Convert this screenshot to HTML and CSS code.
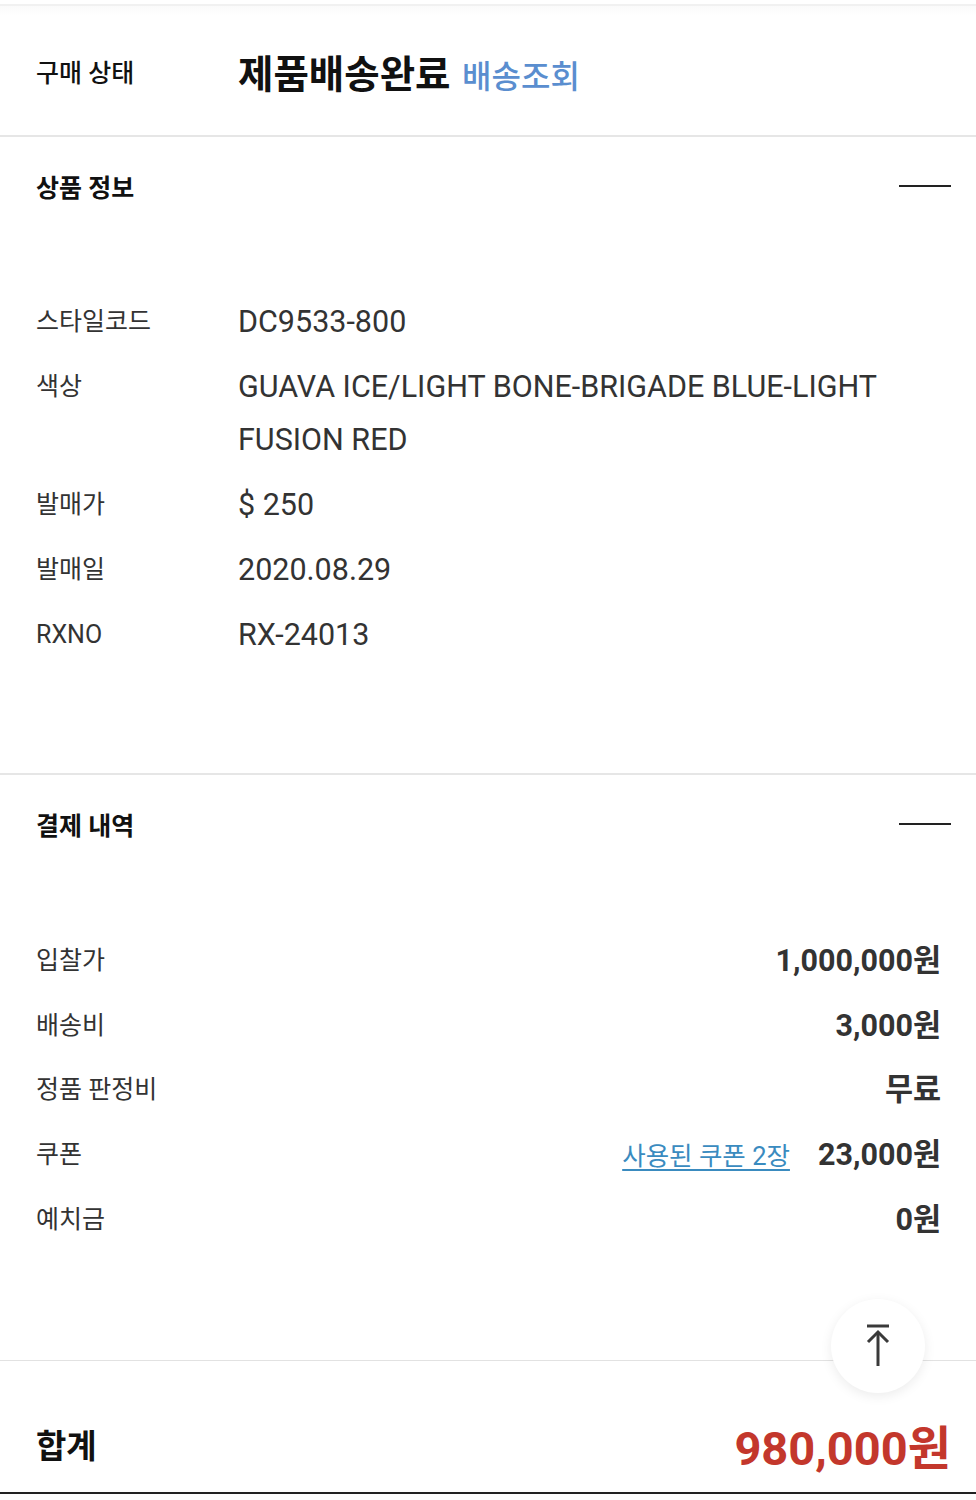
FILE: index.html
```html
<!DOCTYPE html>
<html lang="ko">
<head>
    <meta charset="UTF-8">
    <meta name="viewport" content="width=device-width, initial-scale=1.0">
    <title>구매 내역</title>
    <link rel="stylesheet" href="styles.css">
</head>
<body>
    <div class="topbar"></div>

    <div class="status">
        <div class="status-label">구매 상태</div>
        <div class="status-value">제품배송완료 <a class="track" href="#">배송조회</a></div>
    </div>

    <div class="section">
        <div class="section-head">
            <h2>상품 정보</h2>
            <span class="minus"></span>
        </div>
        <div class="info-list">
            <div class="info-row">
                <div class="label">스타일코드</div>
                <div class="value">DC9533-800</div>
            </div>
            <div class="info-row">
                <div class="label">색상</div>
                <div class="value">GUAVA ICE/LIGHT BONE-BRIGADE BLUE-LIGHT FUSION RED</div>
            </div>
            <div class="info-row">
                <div class="label">발매가</div>
                <div class="value">$ 250</div>
            </div>
            <div class="info-row">
                <div class="label">발매일</div>
                <div class="value">2020.08.29</div>
            </div>
            <div class="info-row">
                <div class="label">RXNO</div>
                <div class="value">RX-24013</div>
            </div>
        </div>
    </div>

    <div class="section payment">
        <div class="section-head">
            <h2>결제 내역</h2>
            <span class="minus"></span>
        </div>
        <div class="pay-list">
            <div class="pay-row">
                <div class="label">입찰가</div>
                <div class="amount">1,000,000원</div>
            </div>
            <div class="pay-row">
                <div class="label">배송비</div>
                <div class="amount">3,000원</div>
            </div>
            <div class="pay-row">
                <div class="label">정품 판정비</div>
                <div class="amount">무료</div>
            </div>
            <div class="pay-row">
                <div class="label">쿠폰</div>
                <div class="amount"><a class="coupon" href="#">사용된 쿠폰 2장</a>23,000원</div>
            </div>
            <div class="pay-row">
                <div class="label">예치금</div>
                <div class="amount">0원</div>
            </div>
        </div>
        <button class="to-top" aria-label="맨 위로">
            <svg width="30" height="44" viewBox="0 0 30 44" fill="none" stroke="#3a3a3a" stroke-width="3">
                <line x1="4" y1="2" x2="26" y2="2"/>
                <line x1="15" y1="8" x2="15" y2="42"/>
                <polyline points="5,18 15,8 25,18"/>
            </svg>
        </button>
    </div>

    <div class="total">
        <div class="total-label">합계</div>
        <div class="total-value">980,000원</div>
    </div>
</body>
</html>
```

FILE: styles.css
```css
body {
    margin: 0;
    background: #fff;
    font-family: Roboto, "Noto Sans CJK KR", sans-serif;
    color: #333;
}
a {
    text-decoration: none;
}
.topbar {
    height: 4px;
    border-bottom: 2px solid #f1f1f1;
    background: #fff;
}
.status {
    display: flex;
    align-items: center;
    height: 129px;
    padding-left: 36px;
    border-bottom: 2px solid #e6e6e6;
    background: linear-gradient(#fafafa, #fff 10px);
}
.status-label {
    width: 202px;
    font-size: 25px;
    font-weight: 500;
    color: #111;
}
.status-value {
    font-size: 38.5px;
    font-weight: 700;
    color: #111;
}
.track {
    margin-left: 2px;
    font-size: 32px;
    font-weight: 500;
    color: #5a8ecf;
}
.section {
    border-bottom: 2px solid #e6e6e6;
}
.section-head {
    display: flex;
    align-items: center;
    justify-content: space-between;
    height: 98px;
    padding: 0 25px 0 36px;
}
.section-head h2 {
    margin: 0;
    font-size: 25px;
    font-weight: 700;
    color: #111;
}
.minus {
    width: 52px;
    height: 2px;
    background: #222;
}
.info-list {
    padding: 54px 25px 106px 36px;
}
.info-row {
    display: flex;
    padding: 6px 0;
    line-height: 53px;
}
.label {
    width: 202px;
    flex-shrink: 0;
    font-size: 25px;
    color: #333;
}
.value {
    font-size: 30.5px;
    color: #333;
}
.payment {
    position: relative;
    border-bottom: 1px solid #e2e2e2;
}
.payment .section-head {
    height: 97px;
}
.pay-list {
    padding: 57px 35px 107px 36px;
}
.pay-row {
    display: flex;
    justify-content: space-between;
    padding: 6px 0;
    line-height: 52.5px;
}
.amount {
    font-size: 30.5px;
    font-weight: 700;
    color: #333;
}
.coupon {
    margin-right: 28px;
    font-size: 25.5px;
    font-weight: 400;
    color: #3a8bbf;
    text-decoration: underline;
    text-underline-offset: 4px;
}
.to-top {
    position: absolute;
    right: 51px;
    bottom: -33px;
    width: 94px;
    height: 94px;
    border: none;
    border-radius: 50%;
    background: #fff;
    box-shadow: 0 3px 12px rgba(0, 0, 0, 0.08);
    display: flex;
    align-items: center;
    justify-content: center;
}
.total {
    display: flex;
    align-items: center;
    justify-content: space-between;
    box-sizing: border-box;
    height: 133px;
    padding: 36px 25px 0 36px;
    border-bottom: 2px solid #222;
}
.total-label {
    font-size: 33px;
    font-weight: 700;
    color: #111;
}
.total-value {
    font-size: 47px;
    font-weight: 700;
    color: #c3372c;
}
```
